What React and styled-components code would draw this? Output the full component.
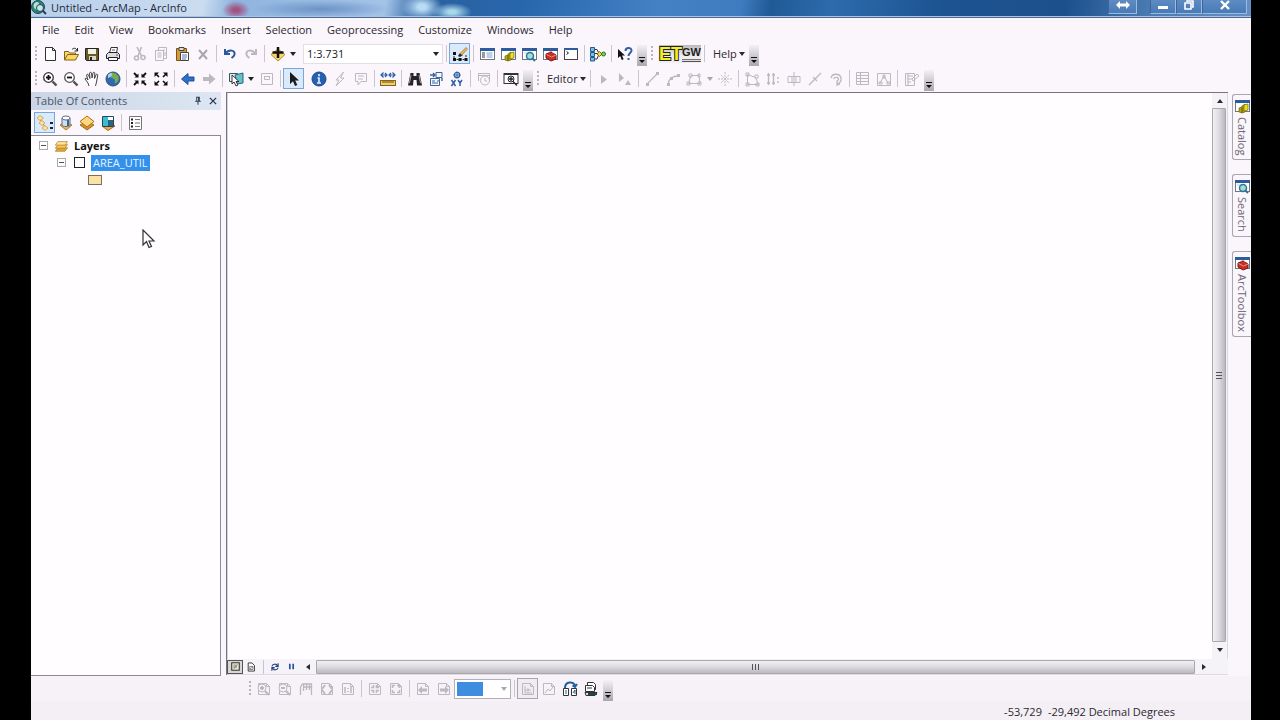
import React from 'react';
import styled, { createGlobalStyle, css } from 'styled-components'

const navy = '#2b5c9e';
const ink = '#222';

// small window with a blue title strip, shared by several icons
const windowFrame = (
  <>
    <rect x="1.5" y="2.5" width="14" height="11" fill="#fff" stroke="#6d7887" />
    <rect x="1" y="2" width="15" height="3" fill={navy} />
  </>
);

const page = <path d="M2.5 2.5h8l3 3v8h-11z M10.5 2.5v3h3" fill="none" stroke="currentColor" />;

const icons = {
  newDoc: <path d="M3.5 1.5h7l3 3v10h-10z M10.5 1.5v3h3" fill="#fff" stroke="#333" />,
  open: <>
    <path d="M1.5 14V5.5h4l1 1.5h6v3" fill="#f8dc72" stroke="#806318" />
    <path d="M1.5 14l3-5.5h11L12.5 14z" fill="#ffd75e" stroke="#806318" />
    <path d="M9 3.5c2-2 4-1.5 5 1M14.5 2v3h-3" fill="none" stroke={ink} />
  </>,
  save: <>
    <path d="M1.5 2.5h13v12h-12l-1-1z" fill="#6b5a26" stroke={ink} />
    <path d="M4 3h8v5H4z" fill="#f3f0e4" />
    <path d="M5 10h7v4H5z" fill="#d9d6cb" />
    <path d="M6 11h2v3H6z" fill="#222" />
  </>,
  print: <>
    <path d="M4.5 7l1.5-5.5h6.5L11.5 7" fill="#fff" stroke="#333" />
    <path d="M1.5 8.5l2-2h9l2 2v4h-13z" fill="#ddd" stroke="#222" />
    <path d="M3.5 11.5h9v3h-9z" fill="#fff" stroke="#222" />
    <path d="M7 4h3M11 9h2" stroke="#555" />
  </>,
  cut: <g fill="none" stroke="currentColor" strokeWidth="1.6">
    <path d="M5 1l4.5 9M9.5 1L6 10" />
    <circle cx="4.5" cy="12" r="2" /><circle cx="11" cy="11.5" r="2" />
  </g>,
  copy: <g fill="none" stroke="currentColor">
    <path d="M2.5 4.5h8v10h-8zM5.5 4V1.5h8v11H11M4.5 7h4M4.5 9h4M4.5 11h4M10 4h2M11 7h2M11 9h2" />
  </g>,
  paste: <>
    <path d="M2.5 2.5h10v12h-10z" fill="#d39b3e" stroke="#7a5417" />
    <path d="M5 1.5h5v3H5z" fill="#ddd" stroke="#444" />
    <path d="M6.5 6.5h8v8h-8z" fill="#fff" stroke="#444" />
    <path d="M8 9h5M8 11h5M8 13h4" stroke="#5a73a0" />
  </>,
  remove: <path d="M4 4l8 9M12 4l-8 9" stroke="#aaa5ad" strokeWidth="2" />,
  undo: <path d="M3 3v5h5M3.5 7.5C7 3 13.5 4 12.5 8.5c-.3 1.5-1.5 2.5-3 3.5" fill="none" stroke="#28599e" strokeWidth="2" />,
  redo: <path d="M13 3v5H8M12.5 7.5C9 3 2.5 4 3.5 8.5c.3 1.5 1.5 2.5 3 3.5" fill="none" stroke="currentColor" strokeWidth="2" />,
  addData: <>
    <path d="M8 3l7 5.500L8 15 1 8.500z" fill="#f7d36b" stroke="#b98a2a" />
    <path d="M8 1v11M2.500 6.500h11" stroke="#111" strokeWidth="2.500" />
  </>,
  sketch: <>
    <path d="M2 7v6.500h12V8" fill="none" stroke="#222" strokeDasharray="2 1" />
    <path d="M1 6h3v3H1zM1 12h3v3H1zM6.500 12h3v3h-3zM12.500 12h3v3h-3z" fill="#111" />
    <path d="M6 10l2-3 3 2-3 2z" fill="#222" />
    <path d="M8 7.500l6-6 1.500 1.500L10 9z" fill="#e3b568" stroke="#9c6927" strokeWidth=".6" />
  </>,
  tocWindow: <>{windowFrame}<path d="M3 7h3M3 9h3M3 11h3" stroke="#333" /><path d="M7.500 7h6M7.500 9h6M7.500 11h6" stroke="#76a1d7" /></>,
  catalog: <>{windowFrame}
    <path d="M5 10l3-1v6l-3-1zM8 8l3-2v8l-3 1z" fill="#b5a414" stroke="#716600" strokeWidth=".7" />
    <path d="M10 7l4-1v6l-4 1z" fill="#eee026" stroke="#716600" strokeWidth=".7" />
  </>,
  search: <>{windowFrame}
    <path d="M3 7h7" stroke="#b9c9dd" />
    <circle cx="9" cy="10" r="3.500" fill="#9fdce3" stroke="#38758a" strokeWidth="1.500" />
    <path d="M11 12l3 3" stroke="#38758a" strokeWidth="2" />
  </>,
  toolbox: <>{windowFrame}
    <path d="M4 8l5-2 5 3v4l-5 2-5-3z" fill="#ca2f25" stroke="#7b1612" />
    <path d="M4.500 8.500l5 2.500 4.500-2M7 6.500c1-2 4-1 4 1" fill="none" stroke="#f08a7f" />
  </>,
  python: <><rect x="1.500" y="2.500" width="13" height="11" fill="#fff" stroke="#444" /><path d="M1 3h14" stroke={navy} strokeWidth="2" /><path d="M3.500 5.500l2 1.500-2 1.500" fill="none" stroke="#222" /></>,
  model: <>
    <path d="M4 3.500h3l2 4H4M4 13h3l2-5h3" fill="none" stroke="#333" />
    <path d="M.5 1.500h4v4h-4zM.5 6.500h4v4h-4zM.5 11.500h4v3.500h-4z" fill="#79bce8" stroke="#235b8d" />
    <path d="M7 8l2.500-2.500L12 8l-2.500 2.500z" fill="#efd83d" stroke="#746b12" />
    <circle cx="13.500" cy="8" r="2" fill="#7dcf65" stroke="#2d7424" />
  </>,
  whatsThis: <>
    <path d="M1 3v9l2.200-2 1.600 4 1.800-.8L5 9.500h3z" fill="#111" />
    <path d="M8.500 5c0-4 6-4 6-.5 0 2.500-3 2.500-3 5.500M11.500 12v2" fill="none" stroke="#3261a8" strokeWidth="2" />
  </>,
  zoomIn: <>
    <circle cx="6.500" cy="6.500" r="4.800" fill="#fff" stroke="#333" strokeWidth="1.300" />
    <path d="M6.500 4v5M4 6.500h5" stroke="#111" strokeWidth="1.800" /><path d="M10.500 10.500l4 4" stroke="#5b4a3e" strokeWidth="2.400" />
  </>,
  zoomOut: <>
    <circle cx="6.500" cy="6.500" r="4.800" fill="#fff" stroke="#555" strokeWidth="1.300" />
    <path d="M4 6.500h5" stroke="#111" strokeWidth="1.800" /><path d="M10.500 10.500l4 4" stroke="#5b4a3e" strokeWidth="2.400" />
  </>,
  pan: <path d="M5 15l-1-3-3-4c.5-1.500 2-1 3 1L2.500 4c.5-1 1.500-1 2 0L6 7.500 5.500 2c.6-1 1.600-1 2 0l.6 5L9 1.800c.6-.8 1.700-.6 1.800.4L10.500 7.500l1.700-4c.8-.8 1.600-.3 1.500.7L12.500 11 11.500 15" fill="#fff" stroke="#444" />,
  globe: <>
    <circle cx="8" cy="8" r="7" fill="#2f69b3" stroke="#355172" />
    <path d="M5 2c3-1 7 0 8.500 3.500 1 3-1 6-3.500 7-1-2 1-3-1-4.500S5 7 5 5z" fill="#72ad54" />
    <path d="M3 4c1-1.500 3-2 4-1.500S5 7 3 7z" fill="#a9d3f2" />
  </>,
  fixedIn: <>
    <path d="M2 2l3 3M14 2l-3 3M2 14l3-3M14 14l-3-3" stroke="#111" strokeWidth="1.800" />
    <path d="M6.500 2.500v4h-4zM9.500 2.500v4h4zM6.500 13.500v-4h-4zM9.500 13.500v-4h4z" fill="#111" />
  </>,
  fixedOut: <>
    <path d="M6 6L3 3M10 6l3-3M6 10l-3 3M10 10l3 3" stroke="#111" strokeWidth="1.600" />
    <path d="M1.500 1.500H6L1.500 6zM14.500 1.500H10L14.500 6zM1.500 14.500H6L1.500 10zM14.500 14.500H10L14.500 10z" fill="#111" />
  </>,
  back: <path d="M1.500 8L8 2.500V6h6v4H8v3.500z" fill="#2d70c9" stroke="#1f4f98" />,
  forward: <path d="M14.500 8L8 2.500V6H2v4h6v3.500z" fill="currentColor" />,
  selectFeatures: <>
    <path d="M1.500 2.500h8v8h-8z" fill="#e7f1f3" stroke="#3a5160" />
    <path d="M7 4l8-2v10l-6 1z" fill="#62c2ce" stroke="#2e6370" />
    <path d="M4 4v9l2-2 2 4 2-1-2-3.500h3z" fill="#fff" stroke="#222" strokeWidth=".9" />
  </>,
  clear: <g fill="none" stroke="currentColor"><path d="M2.500 2.500h11v11h-11zM5 5.500h6M5.500 6v2.500h5V6" /></g>,
  pointer: <path d="M4 1v12l3-2.800 2 4.800 2.300-1L9.200 9.500H13z" fill="#1b1b1f" />,
  info: <>
    <circle cx="8" cy="8" r="7" fill="#2860b1" stroke="#17478d" />
    <path d="M8 3v2.200M6.500 7H8v5M6 12h4" stroke="#d8e9fb" strokeWidth="1.700" fill="none" />
  </>,
  hyperlink: <path d="M11.500 1L4 9h3l-3 6 8-8H8.500z" fill="none" stroke="currentColor" />,
  popup: <path d="M2.500 2.500h11v8H8L5 14v-3.500H2.500zM5 5h6M5 8h5" fill="none" stroke="currentColor" />,
  measure: <>
    <path d="M1 4h5.500M9.500 4H15M3.500 1.500L1 4l2.500 2.500M5 2l2 2-2 2M11 2L9 4l2 2M12.500 1.500L15 4l-2.500 2.500" fill="none" stroke="#2e5ea7" strokeWidth="1.200" />
    <rect x=".5" y="9.500" width="15" height="5" fill="#f2cf65" stroke="#8b6519" />
    <path d="M3 10v2M5 10v2M7 10v2M9 10v2M11 10v2M13 10v2" stroke="#634a16" />
  </>,
  find: <>
    <path d="M3.500 2h3v3h3V2h3l1 5 1.500 7.500h-5L9.500 9h-3L6 14.500H1L2.500 7z" fill="#252525" />
    <path d="M4 4L2.500 12M12 4l1.500 8" stroke="#aaa" />
  </>,
  route: <g fill="none" stroke="#3d6593">
    <path d="M2.500 7.500h9v7h-9z" fill="#f2f7fd" />
    <path d="M4 10h3M9 10h2M4 12h6M8 1.500h6v5H8z" /><path d="M2 4h5M5 2l2 2-2 2M14 7v3" strokeWidth="1.400" />
  </g>,
  xy: <>
    <circle cx="8" cy="4" r="2.700" fill="#fff" stroke="#2d61a4" strokeWidth="1.300" />
    <path d="M8 .5v7M4.500 4h7" stroke="#2d61a4" />
    <path d="M2.500 9l4 6M6.500 9l-4 6M9 9l2 3 2-3M11 12v3" stroke="#2d61a4" strokeWidth="1.500" fill="none" />
  </>,
  time: <g fill="none" stroke="currentColor"><path d="M2.500 10V2.500h11V10M2 4.500h12" /><circle cx="9" cy="9.500" r="4.500" /><path d="M9 7v3h2" /></g>,
  viewer: <>
    <rect x="1" y="2.500" width="14" height="10" fill="#fff" stroke="#333" /><path d="M1 3h14" stroke="#333" strokeWidth="2" />
    <circle cx="8" cy="8" r="3" fill="#e9f2fb" stroke="#222" /><path d="M8 6v4M6 8h4M10 10.500l4 4" stroke="#222" strokeWidth="1.300" />
  </>,
  editTool: <path d="M5 4v9l6-4.500z" fill="currentColor" />,
  annoTool: <path d="M2 2v9l5-4zM11 9l-3 5h6z" fill="currentColor" />,
  line: <><path d="M3 13L13 3" stroke="currentColor" strokeWidth="1.300" /><path d="M2 12h3v3H2zM12 1h3v3h-3z" fill="currentColor" /></>,
  arc: <><path d="M3 13C4 8 7 5 13 5" fill="none" stroke="currentColor" strokeWidth="1.300" /><path d="M2 12h3v3H2zM5 6h3v3H5zM12 3h3v3h-3z" fill="currentColor" /></>,
  trace: <path d="M5 4.500h8l1 8H2.500zM3 3h3v3H3zM12 3h2v3h-2zM12 11h3v3h-3zM1 11h3v3H1z" fill="none" stroke="currentColor" />,
  point: <path d="M8 1v14M1 8h14M4 4l8 8M12 4l-8 8" stroke="currentColor" strokeDasharray="2 1" />,
  vertices: <path d="M3.500 3.500v10h11l-3-7zM2 2h3v3H2zM2 12h3v3H2zM12 12h3v3h-3zM11 4h3v3h-3z" fill="none" stroke="currentColor" />,
  reshape: <path d="M3.500 2v12M8.500 2v12M2 4h3M2 12h3M7 4h3M7 12h3M13 6v2M13 10v2" fill="none" stroke="currentColor" strokeWidth="1.400" />,
  cutPoly: <path d="M8 1v14M2 5.500h12v6H2zM6 5v6M10 5v6" fill="none" stroke="currentColor" />,
  split: <path d="M2 14L14 2M6 6l4 4" stroke="currentColor" strokeWidth="1.300" />,
  rotate: <path d="M3 7c1-5 9-5 10 0 .5 3-1 5-3.500 6M5.500 8c1-2.500 5-2 5 0 0 1.500-1 2-2 2.500M9 10v4l3-1" fill="none" stroke="currentColor" strokeWidth="1.300" />,
  attributes: <path d="M1.500 1.500h12v12h-12zM2 4.500h11M2 7.500h11M2 10.500h11M5.500 2v11" fill="none" stroke="currentColor" />,
  sketchProps: <path d="M1.500 2.500h13v12h-13zM4 12L8 5l4 7M3 11h3v2H3zM7 4h2v3H7zM11 11h3v2h-3z" fill="none" stroke="currentColor" />,
  template: <path d="M2.500 2.500h9v12h-9zM4 5h6M4 8h5M4 11h4M5 3v11M9 8l5-5 2 2-6 5z" fill="none" stroke="currentColor" />,
  listOrder: <>
    <path d="M3 4l5 8" stroke="#a58339" />
    <path d="M0 3l3-2.500L6.500 3 3 5.500zM2 8l3-2.500L8 8l-3 2.500zM5 13l3-2.500 3 2.500-3 2.500z" fill="#ffe49f" stroke="#c99b4c" strokeWidth=".8" />
    <path d="M13 8h3M13 13h3" stroke="#222" strokeWidth="2" />
  </>,
  listSource: <>
    <path d="M2 10l6-3 6 3-6 5z" fill="#f1b655" stroke="#b27927" />
    <path d="M4 3v7c0 2 8 2 8 0V3" fill="#d5dfeb" stroke="#596b85" />
    <ellipse cx="8" cy="3" rx="4" ry="2" fill="#fff" stroke="#596b85" /><path d="M10 5v6" stroke="#3764a0" strokeWidth="2" />
  </>,
  listVisible: <>
    <path d="M1 10l7-4 7 4-7 5z" fill="#d88e24" stroke="#a76c24" /><path d="M1 6.500L8 1l7 5.500L8 12z" fill="#ffd87e" stroke="#a76c24" />
  </>,
  listSelection: <>
    <path d="M2 11l6-4 7 4-7 4.500z" fill="#f1a83c" stroke="#a66d28" />
    <path d="M2.500 1.500h11v10h-11z" fill="#fff" stroke="#2b4455" /><path d="M3 2h5v9H3z" fill="#38bed0" /><path d="M8 5h5v6H8z" fill="#286484" />
  </>,
  options: <g fill="none" stroke="#777"><path d="M2.500 1.500h12v13h-12z" fill="#fff" /><path d="M4 4.500h3M4 8h3M4 11.500h3" stroke="#222" strokeWidth="2" strokeDasharray="2 3" /><path d="M8 4.500h5M8 8h5M8 11.500h5" /></g>,
  layers: <g stroke="#a9781d" strokeWidth=".8">
    <path d="M1.500 14l3-4h11l-3 4z" fill="#e5a62d" /><path d="M1.500 10.500l3-4h11l-3 4z" fill="#f5c65c" /><path d="M1.500 7l3-4h11l-3 4z" fill="#ffe49d" />
  </g>,
  pin: <path d="M5 2h6M6 2v6M10 2v6M9 2v6M3.500 8.500h9M8 9v5" stroke="#24334c" strokeWidth="1.500" />,
  close: <path d="M3 3l10 10M13 3L3 13" stroke="#24334c" strokeWidth="2" />,
  dataView: <><path d="M2.500 2.500h11v11h-11z" fill="#e9e7d6" stroke="#333" strokeWidth="1.500" /><path d="M5 5h5v5H5z" fill="#aaa98d" /><path d="M5 12l6-7" stroke="#777" /></>,
  layoutView: <><path d="M3.500 1.500h6l4 4v9h-10z" fill="#fff" stroke="#333" strokeWidth="1.500" /><path d="M6 7h5v5H6zM6 12l5-5" fill="none" stroke="#444" /></>,
  refresh: <path d="M3 7c1-4 7-5 9-1M13 2v5H8.500M13 9c-1 4-7 5-9 1M3 14V9h4.500" fill="none" stroke="#203f78" strokeWidth="1.700" />,
  pause: <path d="M5 3v10M11 3v10" stroke="#28539a" strokeWidth="3" />,
  pageZoomIn: <>{page}<circle cx="6" cy="7" r="4" fill="#f5f2f7" stroke="currentColor" /><path d="M6 5v4M4 7h4M9 10l4 4" stroke="currentColor" strokeWidth="2" /></>,
  pageZoomOut: <>{page}<circle cx="6" cy="7" r="4" fill="#f5f2f7" stroke="currentColor" /><path d="M4 7h4M9 10l4 4" stroke="currentColor" strokeWidth="2" /></>,
  pagePan: <path d="M2.500 14V6M5.500 10V3M8.500 9V2M11.500 9V3M2.500 6l2-3h9v11M6 6h7" fill="none" stroke="currentColor" strokeWidth="1.300" />,
  pageFull: <>{page}<path d="M3 8l3-4M10 4l3 4M13 9l-3 4M6 13L3 9" stroke="currentColor" strokeWidth="2" /></>,
  pageOne: <>{page}<path d="M5 6v6M8 7v1M8 10v1M11 6v6" stroke="currentColor" strokeWidth="1.500" /></>,
  pageFixedIn: <>{page}<path d="M4 6.500h2.500V4M9.500 4v2.500H12M4 9.500h2.500V12M9.500 12V9.500H12" fill="none" stroke="currentColor" strokeWidth="1.600" /></>,
  pageFixedOut: <>{page}<path d="M7 4.500H4.500V7M9 4.500h2.500V7M4.500 9v2.500H7M11.500 9v2.500H9" fill="none" stroke="currentColor" strokeWidth="1.600" /></>,
  pageBack: <>{page}<path d="M3 9l4-4v2.500h5v3H7V13z" fill="currentColor" /></>,
  pageForward: <>{page}<path d="M13 9L9 5v2.500H4v3h5V13z" fill="currentColor" /></>,
  draft: <>{page}<path d="M5 5v7h7M5 9h6M8 7v4" fill="none" stroke="currentColor" /></>,
  frame: <>{page}<path d="M4 12l3-4 2 2 3-4" fill="none" stroke="currentColor" /></>,
  changeLayout: <>
    <path d="M3 7c0-7 9-7 10-2M10.500 4.500L13 6l2-3" fill="none" stroke="#215e96" strokeWidth="2" />
    <path d="M1.500 7.500h5v7h-5zM9.500 7.500h5v7h-5z" fill="#fff" stroke="#333" /><path d="M3 10h2M3 12h2M11 12l2-3v4" stroke="#215e96" fill="none" />
  </>,
  drivenPages: <g fill="#fff" stroke="#333">
    <path d="M4.500 1.500h6l2 2v5h-8z" /><path d="M2.500 4.500h7l2 2v4h-9zM4 7h5" /><path d="M2 11.500h12l-2 3H3z" fill="#dfe6ea" /><path d="M5 13h9" stroke="#245" strokeWidth="2" />
  </g>,
  appLogo: <>
    <circle cx="7" cy="7" r="6.500" fill="#2a8578" stroke="#1b4e58" />
    <path d="M3 4c2-3 5-2 5 0S5 7 6 10c-3-1-4-4-3-6z" fill="#b7e4c9" />
    <circle cx="9" cy="8" r="3.500" fill="#c5e6ef" stroke="#293d55" /><path d="M11.500 10.500L15 14" stroke="#293d55" strokeWidth="2" />
  </>,
};

const Icon = ({ name, size = 16 }) => (
  <svg width={size} height={size} viewBox="0 0 16 16" aria-hidden="true">{icons[name]}</svg>
)

const Caret = ({ dir = 'down' }) => {
  const shapes = { down: 'M0 1h6L3 5z', up: 'M0 5h6L3 1z', left: 'M5 0v6L1 3z', right: 'M1 0v6l4-3z' };
  return <svg width="6" height="6" viewBox="0 0 6 6" aria-hidden="true"><path d={shapes[dir]} fill="currentColor" /></svg>
}

const standard = [
  'newDoc', 'open', 'save', 'print', '|', '-cut', '-copy', 'paste', '-remove', '|',
  'undo', '-redo', '|', 'addData', 'v',
];
const standardWindows = ['tocWindow', 'catalog', 'search', 'toolbox', 'python', '|', 'model', '|', 'whatsThis'];
const tools = [
  'zoomIn', 'zoomOut', 'pan', 'globe', '|', 'fixedIn', 'fixedOut', '|', 'back', '-forward', '|',
  'selectFeatures', 'v', '-clear', '|', '*pointer', ' ', 'info', '-hyperlink', '-popup', '|', 'measure', '|',
  'find', 'route', 'xy', '|', '-time', '|', 'viewer',
];
const editing = [
  '|', '-editTool', '-annoTool', '|', '-line', '-arc', '-trace', '-v', '-point', '|',
  '-vertices', '-reshape', '-cutPoly', '-split', '-rotate', '|', '-attributes', '-sketchProps', '|', '-template',
];
const layoutTools = [
  '-pageZoomIn', '-pageZoomOut', '-pagePan', '-pageFull', '-pageOne', '|',
  '-pageFixedIn', '-pageFixedOut', '|', '-pageBack', '-pageForward',
];

// "|" separator, " " gap, "v" drop-down arrow, "-" disabled, "*" pressed
const Tools = ({ items }) => items.map((item, i) => {
  if (item === '|') return <Separator key={i} />
  if (item === ' ') return <Separator key={i} $blank />
  const disabled = item[0] === '-';
  const pressed = item[0] === '*';
  const name = disabled || pressed ? item.slice(1) : item;
  if (name === 'v') return <DropArrow key={i} disabled={disabled} aria-label="More"><Caret /></DropArrow>
  return (
    <ToolButton key={i} disabled={disabled} $pressed={pressed} aria-label={name}>
      <Icon name={name} />
    </ToolButton>
  )
})

const Overflow = () => (
  <OverflowButton aria-label="Toolbar options">
    <svg width="6" height="7" viewBox="0 0 6 7"><path d="M0 0h6v1H0zM0 3h6L3 6z" fill="#111" /></svg>
  </OverflowButton>
)

const menus = ['File', 'Edit', 'View', 'Bookmarks', 'Insert', 'Selection', 'Geoprocessing', 'Customize', 'Windows', 'Help'];
const dockTabs = [
  { label: 'Catalog', icon: 'catalog' },
  { label: 'Search', icon: 'search' },
  { label: 'ArcToolbox', icon: 'toolbox' },
];

const App = () => {
  return (
    <>
      <GlobalStyle />
      <Window>
        <TitleBar>
          <Icon name="appLogo" />
          <Title>Untitled - ArcMap - ArcInfo</Title>
          <CaptionButton $w={29} $alone aria-label="Switch screen">
            <svg width="14" height="8" viewBox="0 0 14 8"><path d="M0 4l4-4v2.500h6V0l4 4-4 4V5.500H4V8z" fill="#fff" /></svg>
          </CaptionButton>
          <CaptionButton $w={26} aria-label="Minimize">
            <svg width="10" height="10" viewBox="0 0 10 10"><path d="M0 6h10v3H0z" fill="#fff" /></svg>
          </CaptionButton>
          <CaptionButton $w={26} aria-label="Restore">
            <svg width="10" height="10" viewBox="0 0 10 10"><path d="M3 2V1h6v6H8M1 3h6v6H1z" fill="none" stroke="#fff" strokeWidth="1.600" /></svg>
          </CaptionButton>
          <CaptionButton $w={45} aria-label="Close">
            <svg width="10" height="10" viewBox="0 0 10 10"><path d="M1 1l8 8M9 1L1 9" stroke="#fff" strokeWidth="2.400" /></svg>
          </CaptionButton>
        </TitleBar>

        <MenuBar>
          {menus.map(m => <MenuItem key={m}>{m}</MenuItem>)}
        </MenuBar>

        <Toolbar>
          <Grip />
          <Tools items={standard} />
          <Combo $w={140}>
            <select aria-label="Map scale"><option>1:3.731</option></select>
            <Caret />
          </Combo>
          <Separator />
          <Tools items={['*sketch', '|', ...standardWindows]} />
          <Overflow />
          <Grip />
          <EtButton aria-label="ET GeoWizards"><b>ET</b><span>GW</span></EtButton>
          <Separator />
          <TextButton>Help <Caret /></TextButton>
          <Overflow />
        </Toolbar>
        <Toolbar>
          <Grip />
          <Tools items={tools} />
          <Overflow />
          <Grip />
          <TextButton>Editor <Caret /></TextButton>
          <Tools items={editing} />
          <Overflow />
        </Toolbar>

        <Workspace>
          <Contents>
            <PanelHeader>
              <h2>Table Of Contents</h2>
              <PanelButton aria-label="Auto hide"><Icon name="pin" size={10} /></PanelButton>
              <PanelButton aria-label="Close panel"><Icon name="close" size={10} /></PanelButton>
            </PanelHeader>
            <PanelTools>
              <Tools items={['*listOrder', 'listSource', 'listVisible', 'listSelection', '|', 'options']} />
            </PanelTools>
            <Tree>
              <TreeRow $depth={0}>
                <Expander aria-label="Collapse Layers" />
                <Icon name="layers" size={14} />
                <strong>Layers</strong>
              </TreeRow>
              <TreeRow $depth={1}>
                <Expander aria-label="Collapse AREA_UTIL" />
                <Checkbox id="area" type="checkbox" />
                <LayerName htmlFor="area">AREA_UTIL</LayerName>
              </TreeRow>
              <TreeRow $depth={2}><Swatch /></TreeRow>
              <Cursor width="14" height="20" viewBox="0 0 14 20">
                <path d="M1 1v15l3.500-3.500L7 18.500l2.500-1L7 12h5z" fill="#fff" stroke="#333" strokeWidth="1.200" />
              </Cursor>
            </Tree>
          </Contents>

          <MapPanel>
            <MapRow>
              <MapCanvas />
              <VScroll>
                <ScrollButton aria-label="Scroll up"><Caret dir="up" /></ScrollButton>
                <Thumb $vertical><i /><i /><i /></Thumb>
                <ScrollButton aria-label="Scroll down"><Caret /></ScrollButton>
              </VScroll>
            </MapRow>
            <HScroll>
              <ViewButton $pressed aria-label="Data view"><Icon name="dataView" size={11} /></ViewButton>
              <ViewButton aria-label="Layout view"><Icon name="layoutView" size={10} /></ViewButton>
              <ViewDivider />
              <ViewButton aria-label="Refresh"><Icon name="refresh" size={10} /></ViewButton>
              <ViewButton aria-label="Pause drawing"><Icon name="pause" size={9} /></ViewButton>
              <ScrollButton aria-label="Scroll left"><Caret dir="left" /></ScrollButton>
              <Thumb><i /><i /><i /></Thumb>
              <ScrollButton aria-label="Scroll right"><Caret dir="right" /></ScrollButton>
            </HScroll>
          </MapPanel>

          <Dock>
            {dockTabs.map(tab => (
              <DockTab key={tab.label}><Icon name={tab.icon} /><span>{tab.label}</span></DockTab>
            ))}
          </Dock>
        </Workspace>

        <LayoutBar>
          <Grip />
          <Tools items={layoutTools} />
          <Combo $w={57} $muted>
            <ZoomField />
            <select aria-label="Page zoom" disabled />
            <Caret />
          </Combo>
          <Separator />
          <ToolButton disabled $pressed $muted aria-label="Draft mode"><Icon name="draft" /></ToolButton>
          <Tools items={['-frame', 'changeLayout', 'drivenPages']} />
          <Overflow />
        </LayoutBar>

        <StatusBar>
          <span>-53,729</span>
          <span>-29,492 Decimal Degrees</span>
        </StatusBar>
      </Window>
    </>
  )
}

const GlobalStyle = createGlobalStyle`
  * {
    box-sizing: border-box;
  }
  body {
    margin: 0;
    background: #000;
    color: #2b2830;
    font: 11px/16px "Open Sans", "Noto Sans", sans-serif;
  }
  button, select {
    margin: 0;
    padding: 0;
    border: 0;
    border-radius: 0;
    background: none;
    color: inherit;
    font: inherit;
  }
  svg {
    display: block;
    flex: none;
  }
`

const Window = styled.div`
  display: flex;
  flex-direction: column;
  min-height: 100vh;
  margin: 0 29px 0 31px;
  background: #faf6fc;
  overflow: hidden;
`

const TitleBar = styled.header`
  display: flex;
  align-items: flex-start;
  height: 18px;
  padding-right: 4px;
  border-bottom: 1px solid #4d6b96;
  box-shadow: inset 0 -1px #a9c3e2;
  background:
    radial-gradient(ellipse 14px 9px at 205px 10px, #a2537f 0 20%, transparent 100%),
    radial-gradient(ellipse 70px 9px at 290px 9px, #6d93c6 0, transparent 100%),
    radial-gradient(ellipse 20px 14px at 391px 7px, #b9dcf5 0 20%, transparent 100%),
    radial-gradient(ellipse 20px 9px at 421px 12px, #a7d7ea 0 20%, transparent 100%),
    linear-gradient(100deg, #b9cfeb 0, #cbdcf0 170px, #8fb4df 200px, #a3c3e7 350px, #2a609f 385px, #2866ab 480px, #4380c4 620px, #3f7cbf 700px, #205996 730px, #2d6bad 790px, #1c5391 900px, #1c508c 1020px, #4979b0 1100px, #638fc4 100%);
`

const Title = styled.h1`
  flex: 1;
  margin: 0 0 0 4px;
  color: #222b3a;
  font-size: 11px;
  font-weight: 400;
  line-height: 15px;
`

const CaptionButton = styled.button`
  display: flex;
  align-items: center;
  justify-content: center;
  width: ${p => p.$w}px;
  height: 14px;
  padding-bottom: 3px;
  border: 1px solid #9dbbe0;
  border-top: 0;
  border-left-color: #3b659b;
  margin-right: ${p => p.$alone ? 13 : 0}px;
  background: linear-gradient(#5e8bc2, #4a7bb7);
`

const MenuBar = styled.nav`
  display: flex;
  align-items: center;
  gap: 15px;
  height: 23px;
  padding-left: 11px;
`

const MenuItem = styled.button`
  white-space: nowrap;
`

const Toolbar = styled.div`
  display: flex;
  align-items: center;
  height: 25px;
`

const LayoutBar = styled(Toolbar)`
  padding-left: 214px;
  background: #f6f2f8;
`

const Grip = styled.span`
  flex: none;
  width: 3px;
  height: 16px;
  margin: 0 1px 0 4px;
  background: repeating-linear-gradient(#b9b3bd 0 2px, transparent 2px 4px) left / 2px 100% no-repeat;
`

const Separator = styled.span`
  flex: none;
  width: ${p => p.$blank ? 4 : 6}px;
  height: 17px;
  background: linear-gradient(#c9c4cd, #c9c4cd) center / 1px 100% no-repeat;
  ${p => p.$blank && css`background: none;`}
`

const ToolButton = styled.button`
  display: flex;
  flex: none;
  align-items: center;
  justify-content: center;
  width: 21px;
  height: 21px;
  &:disabled{
    color: #bdb8c0;
  }
  ${p => p.$pressed && css`
    border: 1px solid ${p.$muted ? '#a9a5ae' : '#74a8de'};
    background: ${p.$muted ? '#efecf2' : '#dbeaf9'};
  `}
`

const DropArrow = styled.button`
  display: flex;
  align-items: center;
  justify-content: center;
  width: 10px;
  height: 20px;
  color: #222;
  &:disabled{
    color: #a9a4ad;
  }
`

const TextButton = styled.button`
  display: flex;
  align-items: center;
  gap: 2px;
  padding: 0 2px 0 6px;
`

const OverflowButton = styled.button`
  display: flex;
  align-items: flex-end;
  justify-content: center;
  align-self: flex-end;
  width: 10px;
  height: 21px;
  margin-left: 2px;
  padding-bottom: 2px;
  background: linear-gradient(#f4f0f6, #aba7af);
`

const Combo = styled.div`
  display: flex;
  flex: none;
  align-items: center;
  width: ${p => p.$w}px;
  height: 20px;
  margin-left: ${p => p.$muted ? 0 : 5}px;
  padding: 0 3px;
  border: 1px solid ${p => p.$muted ? '#b4b0b9' : '#e3dfe7'};
  background: #fff;
  color: ${p => p.$muted ? '#aaa' : '#222'};
  select{
    flex: 1;
    min-width: 0;
    appearance: none;
    outline: none;
  }
`

const ZoomField = styled.span`
  width: 26px;
  height: 14px;
  margin-left: -1px;
  background: #3f8de0;
`

const EtButton = styled.button`
  display: flex;
  width: 42px;
  height: 18px;
  margin-left: 4px;
  background: linear-gradient(#bdb9b9, #f1edef 60%);
  b{
    color: #f5f024;
    font: 900 18px/18px "Liberation Sans", sans-serif;
    -webkit-text-stroke: 2px #222;
    paint-order: stroke fill;
  }
  span{
    height: 17px;
    padding-top: 2px;
    border-bottom: 1px solid #555;
    box-shadow: inset 0 -1px #ddd, inset 0 -2px #777;
    color: #222;
    font: 700 11px/11px "Liberation Sans", sans-serif;
  }
`

const Workspace = styled.main`
  display: flex;
  flex: 1;
  margin-top: 1px;
`

const Contents = styled.section`
  display: flex;
  flex-direction: column;
  width: 190px;
  margin-right: 5px;
`

const PanelHeader = styled.header`
  display: flex;
  align-items: center;
  height: 18px;
  padding: 0 1px 0 4px;
  background: linear-gradient(90deg, #cbd5e5, #dde6f2);
  h2{
    flex: 1;
    margin: 0;
    color: #4b5568;
    font-size: 11px;
    font-weight: 400;
  }
`

const PanelButton = styled.button`
  display: flex;
  align-items: center;
  justify-content: center;
  width: 15px;
  height: 16px;
`

const PanelTools = styled.div`
  display: flex;
  align-items: center;
  height: 25px;
  padding-left: 3px;
`

const Tree = styled.div`
  position: relative;
  flex: 1;
  padding-top: 1px;
  border: solid #8d8a94;
  border-width: 1px 1px 1px 0;
  background: #fffdff;
  strong{
    color: #111;
  }
`

const TreeRow = styled.div`
  display: flex;
  align-items: center;
  gap: 6px;
  height: 17px;
  padding-left: ${p => 8 + p.$depth * 18 + (p.$depth === 2 ? 13 : 0)}px;
`

const Expander = styled.button`
  width: 9px;
  height: 9px;
  border: 1px solid #aaa;
  background: linear-gradient(#456, #456) center / 5px 1px no-repeat #fff;
`

const Checkbox = styled.input`
  appearance: none;
  width: 11px;
  height: 11px;
  margin: 0 0 0 2px;
  border: 1px solid #222;
  background: #fff;
`

const LayerName = styled.label`
  padding: 0 2px;
  background: #3391ec;
  color: #e7f3ff;
`

const Swatch = styled.span`
  width: 14px;
  height: 10px;
  border: 1px solid #777064;
  background: #fbe3a5;
`

// mouse pointer lying over the tree
const Cursor = styled.svg`
  position: absolute;
  top: 93px;
  left: 111px;
`

const MapPanel = styled.section`
  display: flex;
  flex: 1;
  flex-direction: column;
  margin-bottom: 1px;
  border: solid #77747d;
  border-width: 1px 0 0 1px;
`

const MapRow = styled.div`
  display: flex;
  flex: 1;
`

const MapCanvas = styled.div`
  flex: 1;
  border-left: 1px solid #d5d2d8;
  background: #fffdff;
`

const VScroll = styled.div`
  display: flex;
  flex-direction: column;
  width: 16px;
  padding-bottom: 2px;
  border-right: 1px solid #dcd9df;
  background: #f6f3f8;
`

const HScroll = styled.div`
  display: flex;
  align-items: center;
  height: 16px;
  padding-right: 16px;
  border-bottom: 1px solid #dcd9df;
  background: #f6f3f8;
`

const ScrollButton = styled.button`
  display: flex;
  flex: none;
  align-items: center;
  justify-content: center;
  width: 17px;
  height: 15px;
  ${VScroll} & {
    width: 15px;
  }
`

const Thumb = styled.div`
  display: flex;
  flex: 1;
  flex-direction: ${p => p.$vertical ? 'column' : 'row'};
  align-items: center;
  justify-content: center;
  gap: 2px;
  ${p => p.$vertical ? 'width' : 'height'}: 14px;
  border: 1px solid #aaa7af;
  border-radius: 1px;
  background: linear-gradient(${p => p.$vertical ? '90deg' : '180deg'}, #f3f0f5, #dddae0 50%, #bbb8c0);
  i{
    width: ${p => p.$vertical ? 6 : 1}px;
    height: ${p => p.$vertical ? 1 : 6}px;
    background: #55525a;
  }
`

const ViewButton = styled.button`
  display: flex;
  flex: none;
  align-items: center;
  justify-content: center;
  width: 16px;
  height: 14px;
  ${p => p.$pressed && css`
    border: 1px solid #555;
    background: #d8d5d6;
  `}
`

const ViewDivider = styled(Separator)`
  height: 14px;
  margin: 0 1px;
`

const Dock = styled.aside`
  display: flex;
  flex-direction: column;
  align-items: flex-end;
  gap: 14px;
  width: 23px;
  padding-top: 2px;
`

const DockTab = styled.button`
  display: flex;
  flex-direction: column;
  align-items: center;
  gap: 3px;
  width: 19px;
  padding: 3px 0 4px;
  border: 1px solid #aaa6ae;
  border-right: 0;
  border-radius: 3px 0 0 3px;
  color: #6d6974;
  span{
    writing-mode: vertical-rl;
    line-height: 16px;
  }
`

const StatusBar = styled.footer`
  display: flex;
  justify-content: flex-end;
  gap: 6px;
  height: 19px;
  padding: 3px 76px 0 0;
  background: #f3eff5;
`

export default App
